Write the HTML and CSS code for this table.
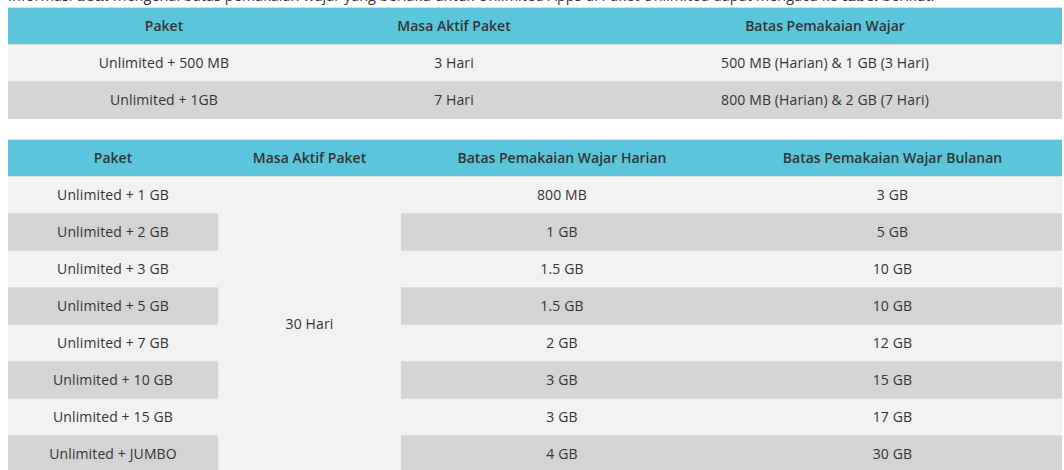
FILE: index.html
```html
<!DOCTYPE html>
<html lang="id">
<head>
<meta charset="utf-8">
<title>Batas Pemakaian Wajar</title>
<link rel="stylesheet" href="styles.css">
</head>
<body>
<div class="page">
  <p class="intro">Informasi <b>detil</b> mengenai batas pemakaian wajar yang berlaku untuk Unlimited Apps di Paket Unlimited dapat mengacu ke <b>tabel</b> berikut.</p>

  <table class="fup fup-short">
    <colgroup>
      <col class="c-paket1"><col class="c-masa1"><col>
    </colgroup>
    <thead>
      <tr><th>Paket</th><th>Masa Aktif Paket</th><th>Batas Pemakaian Wajar</th></tr>
    </thead>
    <tbody>
      <tr><td>Unlimited + 500 MB</td><td>3 Hari</td><td>500 MB (Harian) &amp; 1 GB (3 Hari)</td></tr>
      <tr><td>Unlimited + 1GB</td><td>7 Hari</td><td>800 MB (Harian) &amp; 2 GB (7 Hari)</td></tr>
    </tbody>
  </table>

  <table class="fup fup-month">
    <colgroup>
      <col class="c-paket2"><col class="c-masa2"><col class="c-harian"><col>
    </colgroup>
    <thead>
      <tr><th>Paket</th><th>Masa Aktif Paket</th><th>Batas Pemakaian Wajar Harian</th><th>Batas Pemakaian Wajar Bulanan</th></tr>
    </thead>
    <tbody>
      <tr><td>Unlimited + 1 GB</td><td rowspan="8">30 Hari</td><td>800 MB</td><td>3 GB</td></tr>
      <tr><td>Unlimited + 2 GB</td><td>1 GB</td><td>5 GB</td></tr>
      <tr><td>Unlimited + 3 GB</td><td>1.5 GB</td><td>10 GB</td></tr>
      <tr><td>Unlimited + 5 GB</td><td>1.5 GB</td><td>10 GB</td></tr>
      <tr><td>Unlimited + 7 GB</td><td>2 GB</td><td>12 GB</td></tr>
      <tr><td>Unlimited + 10 GB</td><td>3 GB</td><td>15 GB</td></tr>
      <tr><td>Unlimited + 15 GB</td><td>3 GB</td><td>17 GB</td></tr>
      <tr><td>Unlimited + JUMBO</td><td>4 GB</td><td>30 GB</td></tr>
    </tbody>
  </table>
</div>
</body>
</html>
```

FILE: styles.css
```css
html, body {
  margin: 0;
  padding: 0;
  background: #ffffff;
  overflow: hidden;
}

body {
  font-family: "Open Sans", "Noto Sans", "Liberation Sans", sans-serif;
  font-size: 14px;
  color: #333333;
}

.page {
  padding: 0 2px 0 8px;
}

.intro {
  margin: -15px 0 0 0;
  font-size: 14.5px;
  line-height: 22px;
  color: #333333;
}

.intro b {
  font-weight: 700;
}

.fup {
  width: 1054px;
  border-collapse: collapse;
  table-layout: fixed;
  margin: 0;
}

.fup-month {
  margin-top: 20px;
}

.c-paket1 { width: 312px; }
.c-masa1 { width: 268px; }

.c-paket2 { width: 210px; }
.c-masa2 { width: 183px; }
.c-harian { width: 322px; }

.fup th,
.fup td {
  height: 37px;
  padding: 0 8px;
  box-sizing: border-box;
  text-align: center;
  vertical-align: middle;
  line-height: 20px;
  border-top: 1px solid #dddddd;
}

.fup th {
  background: #5bc6db;
  font-weight: 600;
  color: #333333;
}

.fup td {
  font-weight: 400;
  letter-spacing: 0.12px;
}

.fup tbody tr:nth-child(odd) td {
  background: #f2f2f2;
}

.fup tbody tr:nth-child(even) td {
  background: #d4d4d4;
}
```
